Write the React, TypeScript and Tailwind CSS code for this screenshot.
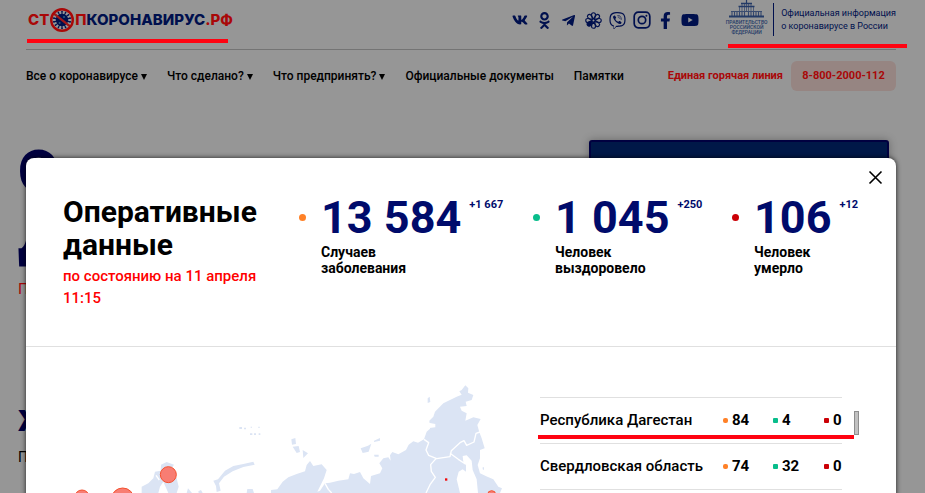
import type { ReactNode } from "react";
import {
  FaFacebookF,
  FaOdnoklassniki,
  FaTelegramPlane,
  FaViber,
  FaVk,
  FaYoutube,
} from "react-icons/fa";

const socials: { label: string; icon: ReactNode }[] = [
  { label: "ВКонтакте", icon: <FaVk size={16} /> },
  { label: "Одноклассники", icon: <FaOdnoklassniki size={17} /> },
  { label: "Telegram", icon: <FaTelegramPlane size={15} /> },
  { label: "ICQ", icon: <IcqIcon /> },
  { label: "Viber", icon: <FaViber size={17} /> },
  { label: "Instagram", icon: <InstagramIcon /> },
  { label: "Facebook", icon: <FaFacebookF size={17} /> },
  { label: "YouTube", icon: <FaYoutube size={18} /> },
];

const nav = [
  { label: "Все о коронавирусе", menu: true },
  { label: "Что сделано?", menu: true },
  { label: "Что предпринять?", menu: true },
  { label: "Официальные документы", menu: false },
  { label: "Памятки", menu: false },
];

const stats = [
  { value: "13 584", delta: "+1 667", lines: ["Случаев", "заболевания"], dot: "bg-[#ff8127]", width: "w-[234px]" },
  { value: "1 045", delta: "+250", lines: ["Человек", "выздоровело"], dot: "bg-[#08bd8b]", width: "w-[199px]" },
  { value: "106", delta: "+12", lines: ["Человек", "умерло"], dot: "bg-[#cb0006]", width: "w-[140px]" },
];

const regions = [
  { name: "Республика Дагестан", sick: 84, healed: 4, died: 0 },
  { name: "Свердловская область", sick: 74, healed: 32, died: 0 },
];

function InstagramIcon() {
  return (
    <svg width="18" height="18" viewBox="0 0 18 18" fill="none" stroke="currentColor" strokeWidth="1.7">
      <rect x="1.2" y="1.2" width="15.6" height="15.6" rx="4.2" />
      <circle cx="9" cy="9" r="3.7" />
      <circle cx="13.4" cy="4.7" r="1" fill="currentColor" stroke="none" />
    </svg>
  );
}

function IcqIcon() {
  const petals = [0, 45, 90, 135, 180, 270, 315];
  return (
    <svg width="17" height="17" viewBox="-9 -9 18 18" fill="none" stroke="currentColor" strokeWidth="1.2">
      {petals.map((a) => (
        <path key={a} transform={`rotate(${a})`} d="M0 -1.6C-2.8 -4.500 -2.8 -8.2 0 -8.2S2.8 -4.500 0 -1.6Z" />
      ))}
      <path transform="rotate(230)" fill="currentColor" d="M0 -1.6C-2.8 -4 -3 -8.2 0 -8.2S2.8 -4 0 -1.6Z" />
    </svg>
  );
}

function VirusIcon() {
  const spikes = Array.from({ length: 14 }, (_, i) => (i * 360) / 14);
  return (
    <svg width="26" height="26" viewBox="-13 -13 26 26" aria-hidden="true">
      <circle r="6.2" fill="#00104e" />
      {spikes.map((a) => (
        <g key={a} transform={`rotate(${a})`}>
          <path d="M0 -5V-8.4" stroke="#00104e" strokeWidth="1.1" />
          <circle cy="-8.4" r="0.8" fill="#00104e" />
        </g>
      ))}
      <circle cx="2" cy="-3" r="1.1" fill="#2d5878" />
      <circle cx="-2.4" cy="3" r="1" fill="#2d5878" />
      <path d="M-8 -6.4L8 6.4" stroke="#a01818" strokeWidth="2.2" />
      <circle r="10.8" fill="none" stroke="#a90808" strokeWidth="2.4" />
    </svg>
  );
}

function GovernmentIcon() {
  return (
    <svg width="37" height="18" viewBox="0 0 37 18" fill="none" stroke="#233a66" aria-hidden="true">
      <path d="M18.500 0V3" strokeWidth="1.2" />
      <path d="M13 3.500H24M10.500 6.500H26.500" strokeWidth="1.3" />
      <path d="M11.500 7V11M14 4V11M16.500 4V11M18.500 4V11M20.500 4V11M23 4V11M25.500 7V11" strokeWidth="0.9" opacity="0.7" />
      <path d="M3 11.500H34" strokeWidth="1" opacity="0.8" />
      <path d="M4 12V16M6.500 12V16M9 12V16M11.500 12V16M14 12V16M16.500 12V16M20.500 12V16M23 12V16M25.500 12V16M28 12V16M30.500 12V16M33 12V16" strokeWidth="1.1" opacity="0.85" />
      <path d="M1 16.500H36" strokeWidth="2" />
    </svg>
  );
}

function RussiaMap() {
  return (
    <svg className="mt-[23px] w-[504px] shrink-0" height="123" viewBox="-762 0 1512 369" role="img" aria-label="Карта России">
      <g fill="#dbe4f4">
        <path d="M-27 369L-27 360L-8 358L8 335L25 322L50 312L75 304L80 285L90 273L100 288L125 283L140 300L132 325L122 345L112 365L120 362L135 340L150 338L175 332L205 328L210 310L222 312L240 306L250 325L270 342L273 318L300 310L307 295L298 280L310 265L325 262L332 272L330 256L337 246L355 253L378 240L386 224L400 214L414 218L432 208L440 185L450 176L448 152L460 140L465 125L490 100L530 80L545 74L538 64L545 60L556 46L565 55L564 68L580 75L575 90L557 95L560 108L540 110L545 122L560 130L556 152L580 142L602 147L592 165L598 187L605 205L614 235L600 240L600 265L593 285L600 310L622 320L640 328L655 350L666 355L660 369Z" />
        <path d="M443 85l6 -5l2 16l-8 3ZM34 208l12 -4l2 18l-12 2ZM38 230l18 -2l4 18l-10 3ZM68 240l16 10l-14 14ZM242 235l22 -8l10 -6l-8 24l-18 4ZM282 212l18 -8l0 8l-18 4ZM282 254l14 0l0 6h-12ZM608 292l4 0v8l-4 -2Z" />
        <path d="M-415 369V350L-395 340L-380 325L-375 305L-358 302L-357 284L-340 276L-318 284L-328 300L-310 325L-304 350L-310 369H-335L-350 335L-360 350L-365 369Z" />
        <path d="M-200 332L-186 328L-165 302L-140 288L-110 282L-80 275L-76 284L-110 291L-142 304L-168 320L-183 340L-178 362L-190 366L-192 348Z" />
        <path d="M-280 369l4 -14l12 14ZM-245 364l8 -4l5 9h-12ZM-100 369l2 -12l16 0l4 12Z" />
        <path d="M-122 171h8v6h-8ZM-108 173h6v5h-6ZM-90 190h7v5h-7ZM-78 190h6v5h-6ZM-64 190h5v5h-5ZM-65 170h4v4h-4ZM-88 170h4v3h-4Z" />
      </g>
      <path fill="#fff" d="M548 258L560 256L575 272L578 300L590 328L594 369H540L530 328L536 305L548 298L558 305L558 286L550 276Z" />
      <path fill="#fff" d="M446 158L466 162L466 172L448 174Z" />
      <g fill="none" stroke="#fff" strokeWidth="4" strokeLinejoin="round">
        <path d="M432 208L446 218L438 240L446 256L470 266L510 260L514 242L540 218L552 212L560 226L582 216L588 190L600 186" />
        <path d="M510 250L535 268L556 282M468 266L452 284L454 304L466 322L450 344L438 369M135 340L145 358L155 369M-362 330L-372 316" />
      </g>
      <g fill="#f87d73" stroke="#f4512e" strokeWidth="3">
        <circle cx="-335" cy="314" r="24" />
        <circle cx="-472" cy="388" r="34" />
        <circle cx="-594" cy="382" r="22" />
        <circle cx="635" cy="374" r="12" />
      </g>
      <rect x="495" y="325" width="7" height="7" fill="#f00a0a" />
    </svg>
  );
}

function Header() {
  return (
    <header className="px-[26px]">
      <div className="mr-[3px] flex h-[50px] items-start justify-between border-b border-[#747474]">
        <a href="#home" className="flex h-[40px] items-center font-['Inter',sans-serif] text-[15px] font-extrabold text-[#a90808]">
          <span className="ml-[2px]">СТ</span>
          <VirusIcon />
          <span>П</span>
          <span className="text-[#00104e]">КОРОНАВИРУС</span>
          <span>.РФ</span>
        </a>
        <div className="flex">
          <div className="mr-[26px] flex h-[40px] w-[194px] items-center justify-between text-[#00104e]">
            {socials.map((s) => (
              <a key={s.label} href="#social" aria-label={s.label} className="flex w-6 justify-center">
                {s.icon}
              </a>
            ))}
          </div>
          <div className="flex items-start">
            <div className="flex w-[37px] flex-col items-center font-medium text-[#233a66]">
              <GovernmentIcon />
              <span className="mt-[2px] text-center text-[5px] leading-[5px]">
                ПРАВИТЕЛЬСТВО
                <br />
                РОССИЙСКОЙ
                <br />
                ФЕДЕРАЦИИ
              </span>
            </div>
            <p className="mt-[3px] ml-2 h-[33px] border-l border-[#00104e] pt-[4px] pl-[7px] text-[9px] leading-[13px] text-[#00104e]">
              Официальная информация
              <br />о коронавирусе в России
            </p>
          </div>
        </div>
      </div>
      <nav className="mr-[3px] mt-[11px] flex h-[30px] items-center text-[12px] font-medium text-black">
        {nav.map((item) => (
          <a key={item.label} href="#nav" className="mr-5 flex items-center gap-[3px] whitespace-nowrap">
            {item.label}
            {item.menu && (
              <svg width="6" height="6" viewBox="0 0 6 6" className="mt-[2px]" aria-hidden="true">
                <path d="M0 0H6L3 6Z" />
              </svg>
            )}
          </a>
        ))}
        <span className="ml-auto text-[11px] font-bold whitespace-nowrap text-[#a90808]">Единая горячая линия</span>
        <a
          href="tel:88002000112"
          className="ml-2 flex h-[30px] w-[105px] items-center justify-center rounded-md bg-[#968582] text-[11px] font-bold whitespace-nowrap text-[#a90808]"
        >
          8-800-2000-112
        </a>
      </nav>
    </header>
  );
}

function Hero() {
  return (
    <section className="mt-[49px] flex justify-between pr-9 pl-[18px]">
      <div className="whitespace-nowrap">
        <h1 className="text-[60px] leading-[64px] font-black text-[#000040]">
          О
          <br />
          Д
        </h1>
        <p className="mt-[11px] text-[15px] leading-5 text-[#a90808]">П</p>
        <h2 className="mt-[104px] text-[30px] leading-9 font-black text-[#000040]">Ж</h2>
        <p className="mt-[8px] text-[14px] leading-5 text-black">П</p>
      </div>
      <div className="h-[180px] w-[300px] rounded-t-[3px] border-2 border-[#000040] bg-[#001848] shadow-[0_0_8px_rgba(0,0,0,0.3)]" />
    </section>
  );
}

function RegionTable() {
  return (
    <div className="relative mt-[50px] flex-1 pr-[54px] pl-[10px]">
      <table className="w-full border-t border-[#e0e0e0] text-[15px] leading-5 text-black">
        <tbody>
          {regions.map((r) => (
            <tr key={r.name} className="h-[46px] border-b border-[#e0e0e0]">
              <th scope="row" className="pb-[2px] text-left font-medium whitespace-nowrap">
                {r.name}
              </th>
              <td className="w-[50px] pb-[2px] font-bold">
                <span className="mr-[4px] inline-block size-[5px] rounded-[2px] bg-[#ff8127] align-[2px]" />
                {r.sick}
              </td>
              <td className="w-[51px] pb-[2px] font-bold">
                <span className="mr-[4px] inline-block size-[5px] rounded-[1px] bg-[#08bd8b] align-[2px]" />
                {r.healed}
              </td>
              <td className="w-[18px] pb-[2px] font-bold whitespace-nowrap">
                <span className="mr-[4px] inline-block size-[5px] rounded-[1px] bg-[#cb0006] align-[2px]" />
                {r.died}
              </td>
            </tr>
          ))}
        </tbody>
      </table>
      <div className="absolute top-[38px] right-[42px] left-[8px] h-1 bg-[#ff0311]" />
      <div className="absolute top-[14px] right-[37px] h-6 w-[5px] border border-[#8d8d8d] bg-[#c1c1c1]" />
    </div>
  );
}

function StatsDialog() {
  return (
    <div
      role="dialog"
      aria-label="Оперативные данные"
      className="absolute top-[158px] right-[29px] bottom-[-40px] left-[26px] rounded-lg bg-white shadow-[0_0_5px_rgba(0,0,0,0.8)]"
    >
      <button type="button" aria-label="Закрыть" className="absolute top-[12px] right-[13px]">
        <svg width="15" height="15" viewBox="0 0 15 15" stroke="#000" strokeWidth="1.6">
          <path d="M1.500 1.500L13.500 13.500M13.500 1.500L1.500 13.500" />
        </svg>
      </button>
      <div className="flex h-[189px] border-b border-[#e0e0e0] pt-[37px] pl-[37px]">
        <div className="w-[236px] shrink-0">
          <h2 className="text-[30px] leading-[33px] font-bold text-black">
            Оперативные
            <br />
            данные
          </h2>
          <p className="mt-1 text-[15px] leading-[22px] font-medium text-[#ff0000]">
            по состоянию на 11 апреля
            <br />
            11:15
          </p>
        </div>
        {stats.map((s) => (
          <div key={s.delta} className={`flex shrink-0 ${s.width}`}>
            <span className={`mt-[19px] mr-[15px] size-[7px] shrink-0 rounded-full ${s.dot}`} />
            <div>
              <div className="flex whitespace-nowrap text-[#000b6b]">
                <span className="text-[45px] leading-[46px] font-bold">{s.value}</span>
                <span className="ml-2 text-[11px] leading-[19px] font-bold">{s.delta}</span>
              </div>
              <p className="mt-[3px] text-[14px] leading-4 font-bold text-black">
                {s.lines[0]}
                <br />
                {s.lines[1]}
              </p>
            </div>
          </div>
        ))}
      </div>
      <div className="flex">
        <RussiaMap />
        <RegionTable />
      </div>
    </div>
  );
}

export default function App() {
  return (
    <div className="relative h-screen overflow-hidden bg-[#969696] font-['Roboto',sans-serif]">
      <Header />
      <Hero />
      <div className="absolute top-[39px] left-[27px] h-1 w-[201px] bg-[#ff0311]" />
      <div className="absolute top-[44px] right-[18px] h-1 w-[179px] bg-[#ff0311]" />
      <StatsDialog />
    </div>
  );
}
